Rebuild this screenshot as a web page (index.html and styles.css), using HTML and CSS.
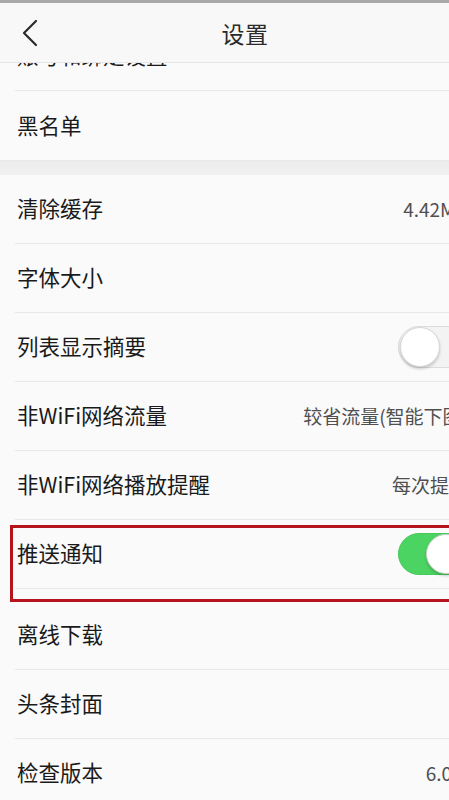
FILE: index.html
```html
<!DOCTYPE html>
<html lang="zh-CN">
<head>
<meta charset="utf-8">
<title>设置</title>
<link rel="stylesheet" href="styles.css">
</head>
<body>
<div class="viewport">
  <div class="screen">
    <div class="statusbar"></div>
    <header class="header">
      <span class="back">
        <svg width="16" height="28" viewBox="0 0 16 28"><path d="M14 2 L2 14 L14 26" fill="none" stroke="#2a2a2a" stroke-width="2.2" stroke-linecap="round" stroke-linejoin="round"/></svg>
      </span>
      <h1 class="title">设置</h1>
    </header>
    <div class="list">
      <div class="list-inner">
        <section class="group">
          <div class="row"><span class="label">账号和绑定设置</span></div>
          <div class="row last"><span class="label">黑名单</span></div>
        </section>
        <div class="gap"></div>
        <section class="group">
          <div class="row"><span class="label">清除缓存</span><span class="value">4.42MB</span></div>
          <div class="row"><span class="label">字体大小</span><span class="value faint">中</span></div>
          <div class="row"><span class="label">列表显示摘要</span><span class="switch"><span class="knob"></span></span></div>
          <div class="row"><span class="label">非WiFi网络流量</span><span class="value">较省流量(智能下图)</span></div>
          <div class="row"><span class="label">非WiFi网络播放提醒</span><span class="value">每次提醒</span></div>
          <div class="row highlight"><span class="label">推送通知</span><span class="switch on"><span class="knob"></span></span></div>
          <div class="row"><span class="label">离线下载</span></div>
          <div class="row"><span class="label">头条封面</span></div>
          <div class="row"><span class="label">检查版本</span><span class="value">6.0.2</span></div>
        </section>
      </div>
    </div>
  </div>
</div>
</body>
</html>
```
FILE: styles.css
```css
* { box-sizing: border-box; }
html, body { margin: 0; padding: 0; background: #f9f9f9; }
body { font-family: "Noto Sans CJK SC", "Noto Sans", sans-serif; color: #222; }

.viewport { width: 449px; height: 800px; overflow: hidden; }
.screen { width: 490px; height: 800px; display: flex; flex-direction: column; background: #f9f9f9; }

.statusbar { height: 3px; background: #a9a9a9; flex: none; }

.header {
  flex: none;
  height: 60px;
  display: flex;
  align-items: center;
  justify-content: center;
  position: relative;
  background: #f8f8f8;
  border-bottom: 1px solid #e6e6e6;
  z-index: 2;
}
.back { position: absolute; left: 22px; top: 16px; display: flex; }
.title { margin: 0; font-size: 23px; font-weight: 400; color: #2b2b2b; letter-spacing: 0.5px; }

.list { flex: 1; overflow: hidden; }
.list-inner { margin-top: -41px; }

.group { background: #fafafa; }
.row {
  height: 69px;
  margin-left: 15px;
  padding-left: 2px;
  padding-right: 22px;
  display: flex;
  align-items: center;
  justify-content: space-between;
  border-bottom: 1px solid #e7e7e7;
  position: relative;
}
.row.last { border-bottom: none; }
.label { font-size: 21.5px; color: #1a1a1a; line-height: 1.2; padding-bottom: 2px; }
.value { font-size: 19px; color: #4f4f4f; line-height: 1.2; }
.value.faint { color: #bdbdbd; }

.gap { height: 15px; background: linear-gradient(#ececec, #f1f1f1); border-top: 1px solid #e9e9e9; }

.switch {
  width: 70px;
  height: 42px;
  border-radius: 21px;
  background: #f3f3f3;
  border: 1px solid #dcdcdc;
  position: relative;
  display: flex;
  align-items: center;
  padding: 0 1px;
}
.switch .knob {
  width: 40px;
  height: 40px;
  border-radius: 50%;
  background: #fff;
  border: 1px solid #d6d6d6;
  box-shadow: 0 2px 3px rgba(0,0,0,0.18);
}
.switch.on { background: #4cd462; border-color: #46c95b; justify-content: flex-end; }
.switch.on .knob { border-color: #cfcfcf; }

.row.highlight { margin-bottom: 12px; }
.row.highlight::after {
  content: "";
  position: absolute;
  left: -5px;
  top: 5px;
  right: -10px;
  height: 71px;
  border: 3px solid #b5141c;
  pointer-events: none;
}
```
